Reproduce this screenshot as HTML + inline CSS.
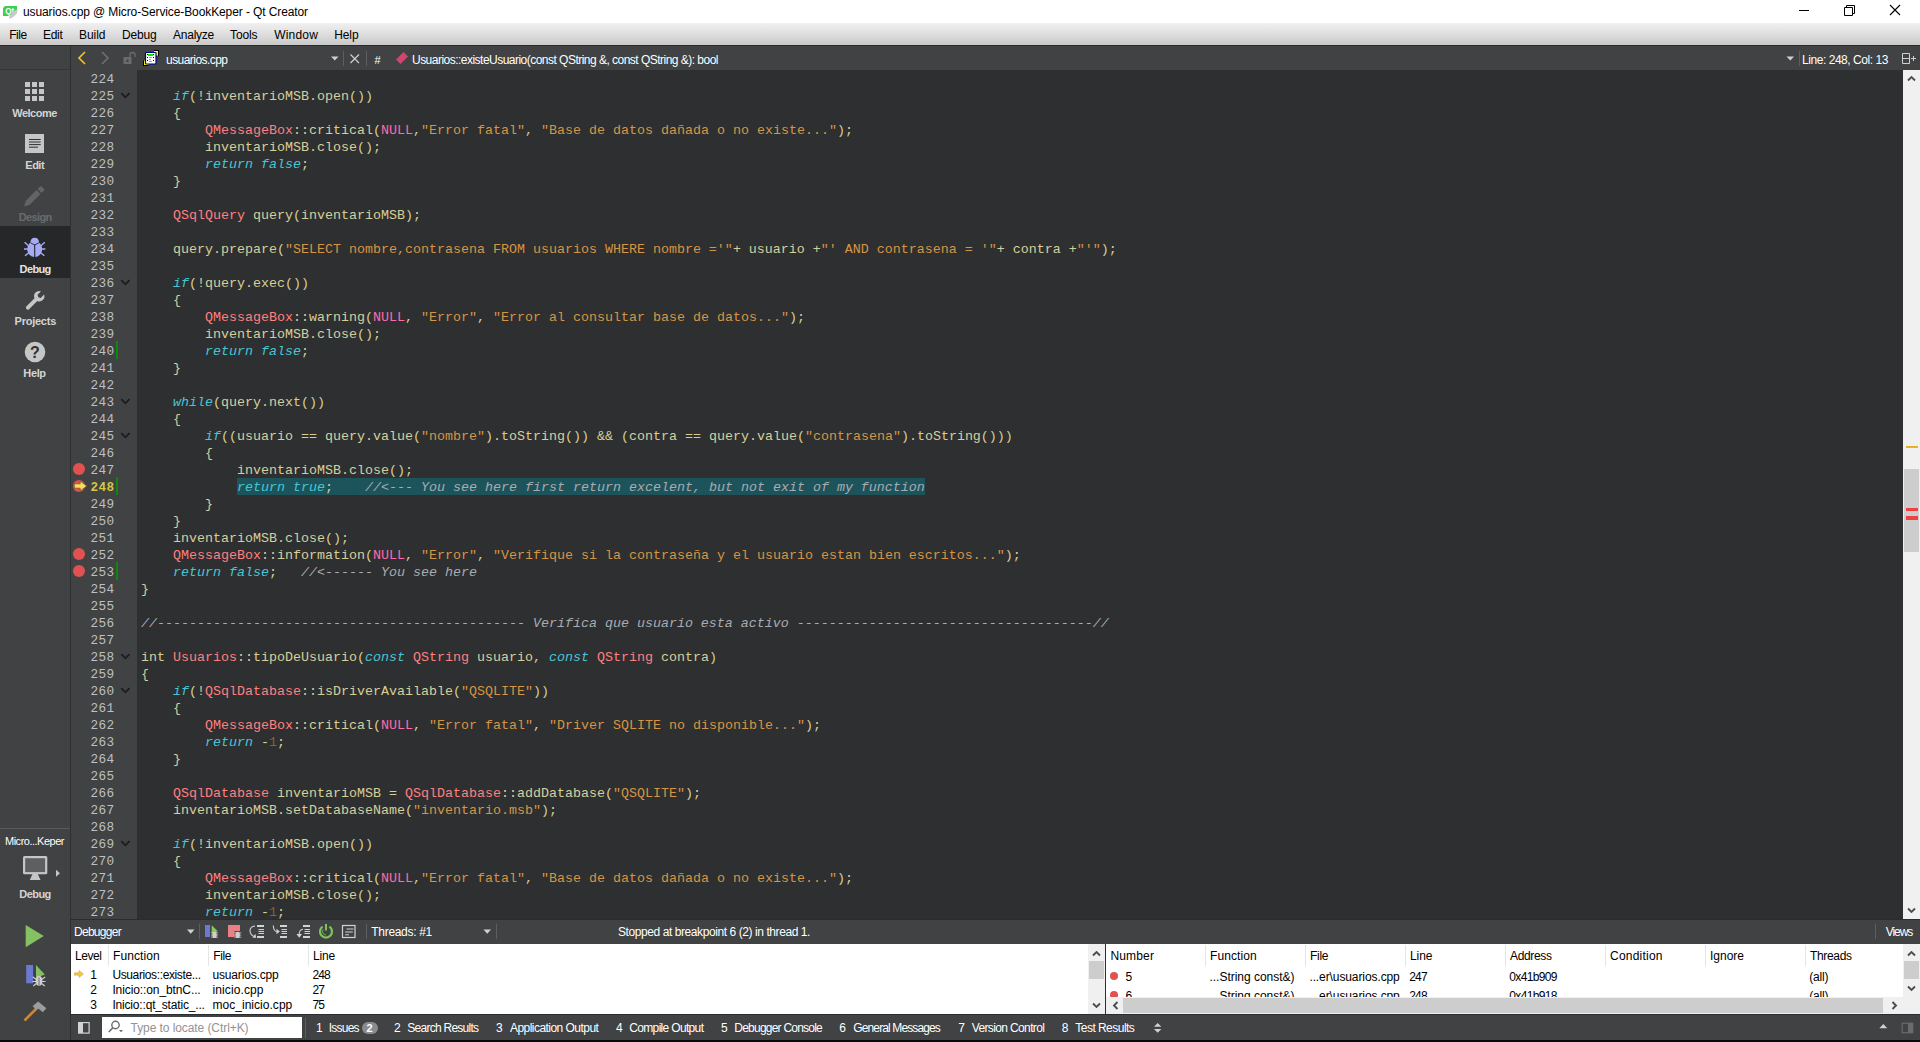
<!DOCTYPE html>
<html lang="es"><head><meta charset="utf-8"><title>usuarios.cpp @ Micro-Service-BookKeper - Qt Creator</title>
<style>
html,body{margin:0;padding:0;}
body{width:1920px;height:1042px;overflow:hidden;background:#404244;position:relative;font-family:"Liberation Sans",sans-serif;font-size:12px;}
.a{position:absolute;}
.t{position:absolute;white-space:pre;line-height:16px;height:16px;}
#code{position:absolute;left:141px;top:70px;font-family:"Liberation Mono",monospace;font-size:13.33px;line-height:17px;color:#d6cf9a;white-space:pre;margin:0;}
#code div{height:17px;line-height:19px;}
#nums{position:absolute;left:71px;top:70px;width:43.400px;text-align:right;font-family:"Liberation Mono",monospace;font-size:12.700px;letter-spacing:0.379px;line-height:17px;color:#bec0c2;white-space:pre;}
#nums div{height:17px;line-height:19px;}
.k{color:#45c6d6;font-style:italic;}
.ty{color:#ff8080;}
.m{color:#ff6aad;}
.s{color:#d69545;}
.n{color:#8a602c;}
.c{color:#a8abb0;font-style:italic;}
.sel{background:#1d545c;}
</style></head><body>

<div class="a" style="left:0;top:0;width:1920px;height:23px;background:#fff;"></div>
<svg class="a" style="left:0px;top:0px" width="22" height="23" viewBox="0 0 22 23">
<path d="M3 8 L5 6 L17 6 L17 13 L12 16 L3 16 Z" fill="#41cd52"/>
<text x="5.300" y="14" font-family="Liberation Sans, sans-serif" font-size="9" font-weight="bold" fill="#fff" textLength="9" lengthAdjust="spacingAndGlyphs">Qt</text>
<path d="M9 18.700 C9.500 14.500 13 10.500 17.800 9.300 C17.500 13.500 14 18 9 18.700 Z" fill="#c9c9c9"/>
</svg>
<span class="t" style="left:23px;top:4px;font-size:12px;color:#000;letter-spacing:-0.104px;">usuarios.cpp @ Micro-Service-BookKeper - Qt Creator</span>
<svg class="a" style="left:1780px;top:0" width="140" height="23" viewBox="0 0 140 23">
<path d="M19 10.5 H29" stroke="#000" stroke-width="1" fill="none"/>
<path d="M64.5 7.5 H72.5 V15.5 H64.5 Z M66.5 7.500 V5.5 H74.5 V13.5 H72.5" stroke="#000" stroke-width="1" fill="none"/>
<path d="M110 5 L120 15 M120 5 L110 15" stroke="#000" stroke-width="1.1" fill="none"/>
</svg>
<div class="a" style="left:0;top:23px;width:1920px;height:22px;background:linear-gradient(#f0f0f0,#e2e2e2 40%,#c9c9c9);"></div>
<span class="t" style="left:9.25px;top:26.5px;font-size:12px;color:#000;letter-spacing:-0.459px;">File</span>
<span class="t" style="left:43px;top:26.5px;font-size:12px;color:#000;letter-spacing:-0.295px;">Edit</span>
<span class="t" style="left:79px;top:26.5px;font-size:12px;color:#000;letter-spacing:-0.037px;">Build</span>
<span class="t" style="left:122px;top:26.5px;font-size:12px;color:#000;letter-spacing:-0.172px;">Debug</span>
<span class="t" style="left:173px;top:26.5px;font-size:12px;color:#000;letter-spacing:-0.242px;">Analyze</span>
<span class="t" style="left:230px;top:26.5px;font-size:12px;color:#000;letter-spacing:-0.103px;">Tools</span>
<span class="t" style="left:274.25px;top:26.5px;font-size:12px;color:#000;letter-spacing:0.178px;">Window</span>
<span class="t" style="left:334.25px;top:26.5px;font-size:12px;color:#000;letter-spacing:-0.108px;">Help</span>
<div class="a" style="left:0;top:45px;width:1920px;height:1px;background:#2b2c2d;"></div>
<div class="a" style="left:0;top:46px;width:70px;height:994px;background:#404244;"></div>
<div class="a" style="left:70px;top:46px;width:1px;height:994px;background:#2e2f30;"></div>
<div class="a" style="left:0;top:69px;width:70px;height:1px;background:#353637;"></div>
<div class="a" style="left:0;top:226px;width:70px;height:52px;background:#262728;"></div>
<svg class="a" style="left:25px;top:82px" width="19" height="19" viewBox="0 0 19 19"><rect x="0" y="0" width="5" height="5" fill="#c6c6c6"/><rect x="7" y="0" width="5" height="5" fill="#c6c6c6"/><rect x="14" y="0" width="5" height="5" fill="#c6c6c6"/><rect x="0" y="7" width="5" height="5" fill="#c6c6c6"/><rect x="7" y="7" width="5" height="5" fill="#c6c6c6"/><rect x="14" y="7" width="5" height="5" fill="#c6c6c6"/><rect x="0" y="14" width="5" height="5" fill="#c6c6c6"/><rect x="7" y="14" width="5" height="5" fill="#c6c6c6"/><rect x="14" y="14" width="5" height="5" fill="#c6c6c6"/></svg>
<span class="t" style="left:12.3px;top:105.3px;font-size:11px;color:#d4d4d4;font-weight:bold;letter-spacing:-0.513px;">Welcome</span>
<svg class="a" style="left:25px;top:134px" width="19" height="19" viewBox="0 0 19 19">
<rect x="0" y="0" width="19" height="19" fill="#c6c6c6"/>
<path d="M4 5.500H15.700M4 8H15.700M4 10.600H15.700M4 13.200H13" stroke="#303132" stroke-width="1"/>
</svg>
<span class="t" style="left:25.3px;top:157.2px;font-size:11px;color:#d4d4d4;font-weight:bold;letter-spacing:-0.494px;">Edit</span>
<svg class="a" style="left:23px;top:185px" width="24" height="24" viewBox="0 0 24 24">
<path d="M1 21.500 L2.800 15.700 L13.500 5 L17.500 9 L6.800 19.700 Z" fill="#636465"/>
<path d="M14.500 4 L17 1.500 Q17.800 0.800 18.600 1.500 L21 3.900 Q21.700 4.700 21 5.500 L18.500 8 Z" fill="#636465"/>
</svg>
<span class="t" style="left:18.7px;top:209.3px;font-size:11px;color:#6a6b6c;font-weight:bold;letter-spacing:-0.612px;">Design</span>
<svg class="a" style="left:0px;top:226px" width="70" height="52" viewBox="0 226 70 52">
<g stroke="#a5abf5" stroke-width="1.4" fill="none">
<path d="M24.600 242.300 L28.500 245.800 M24 249 H28 M25 255.800 L28.800 252.800 M44.800 242.300 L40.900 245.800 M45.400 249 H41.400 M44.400 255.800 L40.600 252.800"/>
</g>
<ellipse cx="34.700" cy="249.200" rx="7.500" ry="7.900" fill="#a5abf5"/>
<path d="M30.300 243.200 Q30.500 237.800 34.700 237.800 Q38.900 237.800 39.100 243.200 Z" fill="#a5abf5"/>
<path d="M34.700 244.500 V257.500" stroke="#262728" stroke-width="1.100"/>
<path d="M30.500 242.800 L34.700 245 L38.900 242.800" stroke="#262728" stroke-width="0.900" fill="none"/>
</svg>
<span class="t" style="left:19.6px;top:261.2px;font-size:11px;color:#e4e4e4;font-weight:bold;letter-spacing:-0.624px;">Debug</span>
<svg class="a" style="left:23.500px;top:288.500px" width="22" height="22" viewBox="0 0 24 24">
<path d="M2.500 19 L11.500 10 A5.500 5.500 0 0 1 18.500 2.600 L14.800 6.300 L15.600 8.900 L18.200 9.700 L21.900 6 A5.500 5.500 0 0 1 14.500 13 L5.500 22 Q4 23.200 2.700 21.800 Q1.400 20.400 2.500 19 Z" fill="#c6c6c6"/>
</svg>
<span class="t" style="left:14.6px;top:313.3px;font-size:11px;color:#d4d4d4;font-weight:bold;letter-spacing:-0.251px;">Projects</span>
<svg class="a" style="left:24px;top:341px" width="22" height="22" viewBox="0 0 22 22">
<circle cx="11" cy="11" r="10.300" fill="#c6c6c6"/>
<text x="11" y="16.500" text-anchor="middle" font-family="Liberation Sans, sans-serif" font-size="16" font-weight="bold" fill="#303132">?</text>
</svg>
<span class="t" style="left:23.3px;top:365.3px;font-size:11px;color:#d4d4d4;font-weight:bold;letter-spacing:-0.359px;">Help</span>
<div class="a" style="left:0;top:828px;width:70px;height:1px;background:#595a5c;"></div>
<span class="t" style="left:5px;top:833.3px;font-size:11px;color:#ffffff;letter-spacing:-0.493px;">Micro...Keper</span>
<svg class="a" style="left:0px;top:850px" width="70" height="40" viewBox="0 850 70 40">
<rect x="23" y="856" width="24.300" height="18.300" rx="1.500" fill="#c6c6c6"/>
<rect x="25.200" y="858.200" width="19.900" height="13.900" fill="#5e5f60"/>
<path d="M32.500 874 H37.800 L40.500 880 H29.800 Z" fill="#c6c6c6"/>
<path d="M56 869.800 L60 873.300 L56 876.800 Z" fill="#c6c6c6"/>
</svg>
<span class="t" style="left:19.3px;top:886px;font-size:11px;color:#d4d4d4;font-weight:bold;letter-spacing:-0.564px;">Debug</span>
<svg class="a" style="left:0px;top:920px" width="70" height="30" viewBox="0 920 70 30"><path d="M25.700 925 L43.800 936.100 L25.700 947.300 Z" fill="#85c163"/></svg>
<svg class="a" style="left:0px;top:960px" width="70" height="30" viewBox="0 960 70 30">
<rect x="26.200" y="965" width="6.900" height="18.300" fill="#6b7ad0"/>
<path d="M36 965 L44.800 974.500 L36 978 Z" fill="#85c163"/>
<ellipse cx="39" cy="981" rx="3.400" ry="4.700" fill="#cfcfcf"/>
<path d="M39 976 a2.500 2 0 0 1 2.500 2 h-5 a2.500 2 0 0 1 2.500 -2" fill="#cfcfcf"/>
<path d="M32.800 977 L36.500 979.500 M45.200 977 L41.500 979.500 M32.500 981.500 H36 M45.500 981.500 H42 M33.200 986 L36.500 983.500 M44.800 986 L41.500 983.500" stroke="#cfcfcf" stroke-width="1.200"/>
<path d="M39 977.500 V985.500" stroke="#404244" stroke-width="0.700"/>
</svg>
<svg class="a" style="left:0px;top:996px" width="70" height="30" viewBox="0 996 70 30">
<path d="M24.500 1020.500 L37.500 1007.500" stroke="#d6852a" stroke-width="2.600"/>
<path d="M32.700 1006 L38.200 1001.400 L46.400 1008.300 L42.800 1012.300 L38.600 1008.800 L35.600 1009.500 Z" fill="#9b9c9d"/>
</svg>
<div class="a" style="left:71px;top:46px;width:1849px;height:24px;background:#404244;"></div>
<svg class="a" style="left:71px;top:46px" width="360" height="24" viewBox="0 0 360 24">
<path d="M14 6 L8 12 L14 18" stroke="#ecc22e" stroke-width="1.700" fill="none"/>
<path d="M31 6 L37 12 L31 18" stroke="#6f7071" stroke-width="1.6" fill="none"/>
<rect x="52.5" y="11" width="8" height="7" fill="#6a6b6c"/><rect x="55.5" y="13.5" width="2" height="2.5" fill="#404244"/>
<path d="M59 11 V9 Q59 6.5 61.5 6.5 Q64 6.5 64 9 V11" stroke="#6a6b6c" stroke-width="1.3" fill="none"/>
<g>
<rect x="83" y="4" width="5" height="6.200" fill="#000"/><rect x="83" y="5" width="4" height="4.700" fill="#ffff00"/>
<rect x="72" y="14.500" width="5.200" height="5.500" fill="#000"/><rect x="73" y="14.500" width="4.200" height="4.500" fill="#ffff00"/>
<rect x="74.500" y="6.500" width="10.500" height="11.500" rx="0.800" fill="#fff" stroke="#00008b" stroke-width="1.200"/>
<rect x="77" y="8" width="5.200" height="2" fill="#00ee00"/>
<path d="M76 8.500h1M82 8.500h1M76 11.500h1M82 11.500h1M76 14.500h1M82 14.500h1" stroke="#000" stroke-width="1"/>
<path d="M78 11.500h3M78 13.500h2M78 15.500h3" stroke="#9a9a9a" stroke-width="1"/>
</g>
<path d="M260 10.5 H267.5 L263.75 14.5 Z" fill="#d0d0d0"/>
<path d="M272.5 5 V20" stroke="#5d5e5f" stroke-width="1"/>
<path d="M279.5 8.5 L288 17 M288 8.5 L279.5 17" stroke="#d0d0d0" stroke-width="1.2"/>
<path d="M295.5 5 V20" stroke="#5d5e5f" stroke-width="1"/>
<path d="M325 13.500 L332.500 6 L337 10.400 L329.450 18 Z" fill="#d6436f"/>
</svg>
<span class="t" style="left:166px;top:51.5px;font-size:12px;color:#ffffff;letter-spacing:-0.545px;">usuarios.cpp</span>
<span class="t" style="left:374.5px;top:51.5px;font-size:11px;color:#ffffff;">#</span>
<span class="t" style="left:412px;top:51.5px;font-size:12px;color:#ffffff;letter-spacing:-0.521px;">Usuarios::existeUsuario(const QString &amp;, const QString &amp;): bool</span>
<svg class="a" style="left:1780px;top:46px" width="140" height="24" viewBox="0 0 140 24">
<path d="M6.5 10.5 H14 L10.25 14.5 Z" fill="#d0d0d0"/>
<path d="M19.5 5 V20" stroke="#5d5e5f" stroke-width="1"/>
<path d="M122.500 7.500 H129.500 V17.500 H122.500 Z M122.500 12.500 H129.500 M131 12.500 H136 M133.500 10 V15" stroke="#d0d0d0" stroke-width="1" fill="none"/>
</svg>
<span class="t" style="left:1802px;top:51.5px;font-size:12px;color:#ffffff;letter-spacing:-0.448px;">Line: 248, Col: 13</span>
<div class="a" style="left:71px;top:70px;width:66px;height:849px;background:#404244;"></div>
<div class="a" style="left:137px;top:70px;width:1766px;height:849px;background:#2e2f30;"></div>
<div class="a" style="left:237px;top:478px;width:688px;height:17px;background:#1d545c;"></div>
<div id="code"><div></div><div>    <span class="k">if</span>(!inventarioMSB.open())</div><div>    {</div><div>        <span class="ty">QMessageBox</span>::critical(<span class="m">NULL</span>,<span class="s">"Error fatal"</span>, <span class="s">"Base de datos dañada o no existe..."</span>);</div><div>        inventarioMSB.close();</div><div>        <span class="k">return</span> <span class="k">false</span>;</div><div>    }</div><div></div><div>    <span class="ty">QSqlQuery</span> query(inventarioMSB);</div><div></div><div>    query.prepare(<span class="s">"SELECT nombre,contrasena FROM usuarios WHERE nombre ='"</span>+ usuario +<span class="s">"' AND contrasena = '"</span>+ contra +<span class="s">"'"</span>);</div><div></div><div>    <span class="k">if</span>(!query.exec())</div><div>    {</div><div>        <span class="ty">QMessageBox</span>::warning(<span class="m">NULL</span>, <span class="s">"Error"</span>, <span class="s">"Error al consultar base de datos..."</span>);</div><div>        inventarioMSB.close();</div><div>        <span class="k">return</span> <span class="k">false</span>;</div><div>    }</div><div></div><div>    <span class="k">while</span>(query.next())</div><div>    {</div><div>        <span class="k">if</span>((usuario == query.value(<span class="s">"nombre"</span>).toString()) &amp;&amp; (contra == query.value(<span class="s">"contrasena"</span>).toString()))</div><div>        {</div><div>            inventarioMSB.close();</div><div>            <span class="k">return</span> <span class="k">true</span>;    <span class="c">//&lt;--- You see here first return excelent, but not exit of my function</span></div><div>        }</div><div>    }</div><div>    inventarioMSB.close();</div><div>    <span class="ty">QMessageBox</span>::information(<span class="m">NULL</span>, <span class="s">"Error"</span>, <span class="s">"Verifique si la contraseña y el usuario estan bien escritos..."</span>);</div><div>    <span class="k">return</span> <span class="k">false</span>;   <span class="c">//&lt;------ You see here</span></div><div>}</div><div></div><div><span class="c">//---------------------------------------------- Verifica que usuario esta activo -------------------------------------//</span></div><div></div><div>int <span class="ty">Usuarios</span>::tipoDeUsuario(<span class="k">const</span> <span class="ty">QString</span> usuario, <span class="k">const</span> <span class="ty">QString</span> contra)</div><div>{</div><div>    <span class="k">if</span>(!<span class="ty">QSqlDatabase</span>::isDriverAvailable(<span class="s">"QSQLITE"</span>))</div><div>    {</div><div>        <span class="ty">QMessageBox</span>::critical(<span class="m">NULL</span>, <span class="s">"Error fatal"</span>, <span class="s">"Driver SQLITE no disponible..."</span>);</div><div>        <span class="k">return</span> -<span class="n">1</span>;</div><div>    }</div><div></div><div>    <span class="ty">QSqlDatabase</span> inventarioMSB = <span class="ty">QSqlDatabase</span>::addDatabase(<span class="s">"QSQLITE"</span>);</div><div>    inventarioMSB.setDatabaseName(<span class="s">"inventario.msb"</span>);</div><div></div><div>    <span class="k">if</span>(!inventarioMSB.open())</div><div>    {</div><div>        <span class="ty">QMessageBox</span>::critical(<span class="m">NULL</span>,<span class="s">"Error fatal"</span>, <span class="s">"Base de datos dañada o no existe..."</span>);</div><div>        inventarioMSB.close();</div><div>        <span class="k">return</span> -<span class="n">1</span>;</div></div>
<div id="nums"><div>224</div><div>225</div><div>226</div><div>227</div><div>228</div><div>229</div><div>230</div><div>231</div><div>232</div><div>233</div><div>234</div><div>235</div><div>236</div><div>237</div><div>238</div><div>239</div><div>240</div><div>241</div><div>242</div><div>243</div><div>244</div><div>245</div><div>246</div><div>247</div><div style="color:#d6c540;font-weight:bold">248</div><div>249</div><div>250</div><div>251</div><div>252</div><div>253</div><div>254</div><div>255</div><div>256</div><div>257</div><div>258</div><div>259</div><div>260</div><div>261</div><div>262</div><div>263</div><div>264</div><div>265</div><div>266</div><div>267</div><div>268</div><div>269</div><div>270</div><div>271</div><div>272</div><div>273</div></div>
<svg class="a" style="left:120px;top:91.5px" width="11" height="8" viewBox="0 0 11 8"><path d="M1.300 1.200 L5.400 5.300 L9.500 1.200" stroke="#1b1c1d" stroke-width="1.800" fill="none"/></svg>
<svg class="a" style="left:120px;top:278.5px" width="11" height="8" viewBox="0 0 11 8"><path d="M1.300 1.200 L5.400 5.300 L9.500 1.200" stroke="#1b1c1d" stroke-width="1.800" fill="none"/></svg>
<svg class="a" style="left:120px;top:397.5px" width="11" height="8" viewBox="0 0 11 8"><path d="M1.300 1.200 L5.400 5.300 L9.500 1.200" stroke="#1b1c1d" stroke-width="1.800" fill="none"/></svg>
<svg class="a" style="left:120px;top:431.5px" width="11" height="8" viewBox="0 0 11 8"><path d="M1.300 1.200 L5.400 5.300 L9.500 1.200" stroke="#1b1c1d" stroke-width="1.800" fill="none"/></svg>
<svg class="a" style="left:120px;top:652.5px" width="11" height="8" viewBox="0 0 11 8"><path d="M1.300 1.200 L5.400 5.300 L9.500 1.200" stroke="#1b1c1d" stroke-width="1.800" fill="none"/></svg>
<svg class="a" style="left:120px;top:686.5px" width="11" height="8" viewBox="0 0 11 8"><path d="M1.300 1.200 L5.400 5.300 L9.500 1.200" stroke="#1b1c1d" stroke-width="1.800" fill="none"/></svg>
<svg class="a" style="left:120px;top:839.5px" width="11" height="8" viewBox="0 0 11 8"><path d="M1.300 1.200 L5.400 5.300 L9.500 1.200" stroke="#1b1c1d" stroke-width="1.800" fill="none"/></svg>
<div class="a" style="left:116px;top:341px;width:2px;height:18px;background:#0a8a0a;"></div>
<div class="a" style="left:116px;top:477px;width:2px;height:18px;background:#0a8a0a;"></div>
<div class="a" style="left:116px;top:562px;width:2px;height:18px;background:#0a8a0a;"></div>
<div class="a" style="left:73px;top:463px;width:12px;height:12px;border-radius:6px;background:#e05252;"></div>
<div class="a" style="left:73px;top:480px;width:12px;height:12px;border-radius:6px;background:#e05252;"></div>
<div class="a" style="left:73px;top:548px;width:12px;height:12px;border-radius:6px;background:#e05252;"></div>
<div class="a" style="left:73px;top:565px;width:12px;height:12px;border-radius:6px;background:#e05252;"></div>
<svg class="a" style="left:72px;top:480px" width="16" height="12" viewBox="0 0 16 12"><path d="M2.300 3.800 H8.200 V1 L14.800 6 L8.200 11 V8.200 H2.300 Z" fill="#f4dc68" stroke="#6a5010" stroke-width="0.700"/></svg>
<div class="a" style="left:1903px;top:70px;width:17px;height:849px;background:#f0f0f0;"></div>
<div class="a" style="left:1904px;top:469px;width:15px;height:83px;background:#cdcdcd;"></div>
<div class="a" style="left:1906px;top:446px;width:12px;height:2px;background:#e6b422;"></div>
<div class="a" style="left:1906px;top:508px;width:12px;height:3px;background:#f04040;"></div>
<div class="a" style="left:1906px;top:516px;width:12px;height:4px;background:#f04040;"></div>
<svg class="a" style="left:1903px;top:70px" width="17" height="849" viewBox="0 0 17 849">
<path d="M5 10.5 L8.5 7 L12 10.500" stroke="#4d4d4d" stroke-width="1.900" fill="none"/>
<path d="M5 838.5 L8.5 842 L12 838.5" stroke="#4d4d4d" stroke-width="1.900" fill="none"/>
</svg>
<div class="a" style="left:71px;top:919px;width:1849px;height:1px;background:#2b2c2d;"></div>
<div class="a" style="left:71px;top:920px;width:1849px;height:24px;background:#404244;"></div>
<span class="t" style="left:74px;top:924.4px;font-size:12px;color:#ffffff;letter-spacing:-0.713px;">Debugger</span>
<span class="t" style="left:371.3px;top:924.4px;font-size:12px;color:#ffffff;letter-spacing:-0.304px;">Threads: #1</span>
<span class="t" style="left:618px;top:924.4px;font-size:12px;color:#ffffff;letter-spacing:-0.420px;">Stopped at breakpoint 6 (2) in thread 1.</span>
<span class="t" style="left:1885.7px;top:924.4px;font-size:12px;color:#ffffff;letter-spacing:-1.039px;">Views</span>
<svg class="a" style="left:0;top:0" width="1920" height="1042" viewBox="0 0 1920 1042"><path d="M187 929.5 h7.5 l-3.75 4.200 Z" fill="#d0d0d0"/><path d="M199.5 923.500 V939 M366.5 923.5 V939 M496.5 923.5 V939 M1875.5 923.5 V939" stroke="#5d5e5f" stroke-width="1"/><path d="M483.5 929.5 h7.5 l-3.75 4.200 Z" fill="#d0d0d0"/><rect x="205" y="925" width="5" height="12" fill="#6b7ad0"/><path d="M211.700 925.2 L217.800 931.200 L211.7 933.5 Z" fill="#8dc55f"/><g transform="translate(211,931)"><ellipse cx="3.500" cy="3.900" rx="2.200" ry="3.200" fill="#cfcfcf"/><path d="M0 1.800h7M0 4h7M0 6.200h7" stroke="#cfcfcf" stroke-width="0.800"/></g><path d="M228 925 h12 v6 h-5.500 v6 h-6.5 Z" fill="#e88085"/><g transform="translate(234.2,931)"><ellipse cx="3.500" cy="3.900" rx="2.200" ry="3.200" fill="#cfcfcf"/><path d="M0 1.800h7M0 4h7M0 6.200h7" stroke="#cfcfcf" stroke-width="0.800"/></g><path d="M257 926 h7 M257 937 h7" stroke="#d2d3d4" stroke-width="2"/><path d="M258.5 929.5 h5.500 M258.5 931.5 h5.5 M258.5 933.5 h5.5" stroke="#d2d3d4" stroke-width="1"/><path d="M255 926 Q250 926.500 250 931 Q250.500 935 254 936.500" stroke="#d2d3d4" stroke-width="1.1" fill="none"/><path d="M252.500 937.8 L256.200 937.8 L255.300 933.800 Z" fill="#d2d3d4"/><path d="M280 926 h7 M280 937 h7" stroke="#d2d3d4" stroke-width="2"/><path d="M281.5 929.5 h5.500 M281.5 931.5 h5.5 M281.5 933.5 h5.5" stroke="#d2d3d4" stroke-width="1"/><path d="M273.300 925.500 Q273.500 931.500 277 931.500" stroke="#d2d3d4" stroke-width="1.1" fill="none"/><path d="M276.500 928.800 L279.800 931.500 L276.500 934.200 Z" fill="#d2d3d4"/><path d="M303 926 h7 M303 937 h7" stroke="#d2d3d4" stroke-width="2"/><path d="M304.5 929.5 h5.500 M304.5 931.5 h5.5 M304.5 933.5 h5.5" stroke="#d2d3d4" stroke-width="1"/><path d="M303 929.200 Q299.200 929.500 299.200 934.500" stroke="#d2d3d4" stroke-width="1.1" fill="none"/><path d="M296.500 934 L302 934 L299.200 937.800 Z" fill="#d2d3d4"/><path d="M322.600 926.600 A6 6 0 1 0 329.400 926.600" stroke="#7fc25a" stroke-width="2.200" fill="none"/><path d="M326 924 V930.500" stroke="#7fc25a" stroke-width="2"/><path d="M323.200 929.500 A3.500 3.500 0 0 0 326 935" stroke="#7fc25a" stroke-width="0.8" fill="none"/><rect x="342.500" y="925.500" width="12.500" height="12" fill="none" stroke="#d2d3d4" stroke-width="1.2"/><path d="M346.500 929 h7 M345.200 932 h7.600 M345.200 934.800 h3.800" stroke="#d2d3d4" stroke-width="1"/></svg>
<div class="a" style="left:71px;top:944px;width:1034px;height:70px;background:#fff;"></div>
<div class="a" style="left:1105px;top:944px;width:1px;height:70px;background:#2e2f30;"></div>
<div class="a" style="left:1106px;top:944px;width:814px;height:70px;background:#fff;"></div>
<div class="a" style="left:108px;top:945px;width:1px;height:21px;background:#e5e5e5;"></div>
<div class="a" style="left:208px;top:945px;width:1px;height:21px;background:#e5e5e5;"></div>
<div class="a" style="left:308px;top:945px;width:1px;height:21px;background:#e5e5e5;"></div>
<span class="t" style="left:75px;top:948px;font-size:12px;color:#000;letter-spacing:-0.458px;">Level</span>
<span class="t" style="left:113px;top:948px;font-size:12px;color:#000;letter-spacing:0.097px;">Function</span>
<span class="t" style="left:213.2px;top:948px;font-size:12px;color:#000;letter-spacing:-0.384px;">File</span>
<span class="t" style="left:312.9px;top:948px;font-size:12px;color:#000;letter-spacing:-0.147px;">Line</span>
<span class="t" style="left:90.2px;top:967px;font-size:12px;color:#000;">1</span>
<span class="t" style="left:112.4px;top:967px;font-size:12px;color:#000;letter-spacing:-0.377px;">Usuarios::existe...</span>
<span class="t" style="left:212.5px;top:967px;font-size:12px;color:#000;letter-spacing:-0.170px;">usuarios.cpp</span>
<span class="t" style="left:312.4px;top:967px;font-size:12px;color:#000;letter-spacing:-0.807px;">248</span>
<span class="t" style="left:90.2px;top:982px;font-size:12px;color:#000;">2</span>
<span class="t" style="left:112.4px;top:982px;font-size:12px;color:#000;letter-spacing:-0.103px;">Inicio::on_btnC...</span>
<span class="t" style="left:212.5px;top:982px;font-size:12px;color:#000;letter-spacing:0.107px;">inicio.cpp</span>
<span class="t" style="left:312.4px;top:982px;font-size:12px;color:#000;letter-spacing:-0.924px;">27</span>
<span class="t" style="left:90.2px;top:997px;font-size:12px;color:#000;">3</span>
<span class="t" style="left:112.4px;top:997px;font-size:12px;color:#000;letter-spacing:-0.178px;">Inicio::qt_static_...</span>
<span class="t" style="left:212.5px;top:997px;font-size:12px;color:#000;letter-spacing:0.030px;">moc_inicio.cpp</span>
<span class="t" style="left:312.4px;top:997px;font-size:12px;color:#000;letter-spacing:-0.924px;">75</span>
<svg class="a" style="left:74px;top:970px" width="10" height="8" viewBox="0 0 10 8"><path d="M0.500 2.800 H5 V0.500 L9.500 4 L5 7.500 V5.200 H0.500 Z" fill="#f0c846" stroke="#c9a23a" stroke-width="0.5"/></svg>
<div class="a" style="left:1088px;top:944px;width:17px;height:70px;background:#f0f0f0;"></div>
<div class="a" style="left:1089px;top:961px;width:15px;height:18px;background:#cdcdcd;"></div>
<svg class="a" style="left:1088px;top:944px" width="17" height="70" viewBox="0 0 17 70"><path d="M5 11.500 L8.500 8 L12 11.500" stroke="#4d4d4d" stroke-width="1.900" fill="none"/><path d="M5 59.500 L8.500 63 L12 59.500" stroke="#4d4d4d" stroke-width="1.900" fill="none"/></svg>
<div class="a" style="left:1205px;top:945px;width:1px;height:21px;background:#e5e5e5;"></div>
<div class="a" style="left:1305px;top:945px;width:1px;height:21px;background:#e5e5e5;"></div>
<div class="a" style="left:1405px;top:945px;width:1px;height:21px;background:#e5e5e5;"></div>
<div class="a" style="left:1505px;top:945px;width:1px;height:21px;background:#e5e5e5;"></div>
<div class="a" style="left:1605px;top:945px;width:1px;height:21px;background:#e5e5e5;"></div>
<div class="a" style="left:1705px;top:945px;width:1px;height:21px;background:#e5e5e5;"></div>
<div class="a" style="left:1805px;top:945px;width:1px;height:21px;background:#e5e5e5;"></div>
<span class="t" style="left:1110.4px;top:948px;font-size:12px;color:#000;letter-spacing:0.170px;">Number</span>
<span class="t" style="left:1210px;top:948px;font-size:12px;color:#000;letter-spacing:0.097px;">Function</span>
<span class="t" style="left:1310px;top:948px;font-size:12px;color:#000;letter-spacing:-0.284px;">File</span>
<span class="t" style="left:1410px;top:948px;font-size:12px;color:#000;letter-spacing:-0.097px;">Line</span>
<span class="t" style="left:1510px;top:948px;font-size:12px;color:#000;letter-spacing:-0.332px;">Address</span>
<span class="t" style="left:1610px;top:948px;font-size:12px;color:#000;letter-spacing:0.222px;">Condition</span>
<span class="t" style="left:1710px;top:948px;font-size:12px;color:#000;letter-spacing:-0.004px;">Ignore</span>
<span class="t" style="left:1810px;top:948px;font-size:12px;color:#000;letter-spacing:-0.332px;">Threads</span>
<div class="a" style="left:1106px;top:966px;width:797px;height:31px;overflow:hidden;">
<div class="a" style="left:4px;top:6px;width:8px;height:8px;border-radius:4px;background:#e05252;"></div>
<span class="t" style="left:19.4px;top:3px;font-size:12px;color:#000;">5</span>
<span class="t" style="left:103.5px;top:3px;font-size:12px;color:#000;letter-spacing:-0.022px;">...String const&amp;)</span>
<span class="t" style="left:203.4px;top:3px;font-size:12px;color:#000;letter-spacing:-0.097px;">...er\usuarios.cpp</span>
<span class="t" style="left:303.3px;top:3px;font-size:12px;color:#000;letter-spacing:-0.874px;">247</span>
<span class="t" style="left:403.3px;top:3px;font-size:12px;color:#000;letter-spacing:-0.665px;">0x41b909</span>
<span class="t" style="left:703.3px;top:3px;font-size:12px;color:#000;letter-spacing:-0.200px;">(all)</span>
<div class="a" style="left:4px;top:25px;width:8px;height:8px;border-radius:4px;background:#e05252;"></div>
<span class="t" style="left:19.4px;top:22px;font-size:12px;color:#000;">6</span>
<span class="t" style="left:103.5px;top:22px;font-size:12px;color:#000;letter-spacing:-0.022px;">...String const&amp;)</span>
<span class="t" style="left:203.4px;top:22px;font-size:12px;color:#000;letter-spacing:-0.097px;">...er\usuarios.cpp</span>
<span class="t" style="left:303.3px;top:22px;font-size:12px;color:#000;letter-spacing:-0.874px;">248</span>
<span class="t" style="left:403.3px;top:22px;font-size:12px;color:#000;letter-spacing:-0.665px;">0x41b918</span>
<span class="t" style="left:703.3px;top:22px;font-size:12px;color:#000;letter-spacing:-0.200px;">(all)</span>
</div>
<div class="a" style="left:1903px;top:944px;width:17px;height:70px;background:#f0f0f0;"></div>
<div class="a" style="left:1904px;top:961px;width:15px;height:18px;background:#cdcdcd;"></div>
<svg class="a" style="left:1903px;top:944px" width="17" height="53" viewBox="0 0 17 53"><path d="M5 11.500 L8.500 8 L12 11.500" stroke="#4d4d4d" stroke-width="1.900" fill="none"/><path d="M5 42.500 L8.500 46 L12 42.500" stroke="#4d4d4d" stroke-width="1.900" fill="none"/></svg>
<div class="a" style="left:1106px;top:997px;width:797px;height:17px;background:#f0f0f0;"></div>
<div class="a" style="left:1123px;top:998px;width:760px;height:15px;background:#cdcdcd;"></div>
<svg class="a" style="left:1106px;top:997px" width="797" height="17" viewBox="0 0 797 17"><path d="M11.500 5 L8 8.500 L11.500 12" stroke="#4d4d4d" stroke-width="1.900" fill="none"/><path d="M786.500 5 L790 8.500 L786.500 12" stroke="#4d4d4d" stroke-width="1.900" fill="none"/></svg>
<div class="a" style="left:71px;top:1014px;width:1849px;height:1px;background:#2b2c2d;"></div>
<div class="a" style="left:71px;top:1015px;width:1849px;height:25px;background:#404244;"></div>
<div class="a" style="left:0;top:1040px;width:1920px;height:2px;background:#0a0a0a;"></div>
<svg class="a" style="left:78px;top:1022px" width="12" height="12" viewBox="0 0 12 12"><rect x="0.600" y="0.600" width="10.500" height="10.500" fill="none" stroke="#d2d3d4" stroke-width="1.2"/><rect x="0.500" y="0.500" width="4.500" height="10.500" fill="#d2d3d4"/></svg>
<div class="a" style="left:102px;top:1017px;width:200px;height:21px;background:#fff;"></div>
<svg class="a" style="left:107px;top:1020px" width="18" height="14" viewBox="0 0 18 14"><circle cx="8.500" cy="5" r="3.700" fill="none" stroke="#6a6b6c" stroke-width="1.4"/><path d="M5.800 7.800 L1.800 12" stroke="#6a6b6c" stroke-width="1.6"/><path d="M12 10 h4 l-2 2.200 Z" fill="#6a6b6c"/></svg>
<span class="t" style="left:130.6px;top:1020px;font-size:12px;color:#939393;letter-spacing:-0.079px;">Type to locate (Ctrl+K)</span>
<div class="a" style="left:305px;top:1018px;width:1px;height:20px;background:#5d5e5f;"></div>
<span class="t" style="left:316px;top:1020.4px;font-size:12px;color:#ffffff;">1</span>
<span class="t" style="left:328.75px;top:1020.4px;font-size:12px;color:#ffffff;letter-spacing:-0.780px;">Issues</span>
<span class="t" style="left:394px;top:1020.4px;font-size:12px;color:#ffffff;">2</span>
<span class="t" style="left:407.3px;top:1020.4px;font-size:12px;color:#ffffff;letter-spacing:-0.741px;">Search Results</span>
<span class="t" style="left:496px;top:1020.4px;font-size:12px;color:#ffffff;">3</span>
<span class="t" style="left:510px;top:1020.4px;font-size:12px;color:#ffffff;letter-spacing:-0.542px;">Application Output</span>
<span class="t" style="left:616px;top:1020.4px;font-size:12px;color:#ffffff;">4</span>
<span class="t" style="left:629.3px;top:1020.4px;font-size:12px;color:#ffffff;letter-spacing:-0.670px;">Compile Output</span>
<span class="t" style="left:721px;top:1020.4px;font-size:12px;color:#ffffff;">5</span>
<span class="t" style="left:734.3px;top:1020.4px;font-size:12px;color:#ffffff;letter-spacing:-0.773px;">Debugger Console</span>
<span class="t" style="left:839.3px;top:1020.4px;font-size:12px;color:#ffffff;">6</span>
<span class="t" style="left:853.3px;top:1020.4px;font-size:12px;color:#ffffff;letter-spacing:-0.876px;">General Messages</span>
<span class="t" style="left:958.3px;top:1020.4px;font-size:12px;color:#ffffff;">7</span>
<span class="t" style="left:971.7px;top:1020.4px;font-size:12px;color:#ffffff;letter-spacing:-0.630px;">Version Control</span>
<span class="t" style="left:1061.7px;top:1020.4px;font-size:12px;color:#ffffff;">8</span>
<span class="t" style="left:1075.3px;top:1020.4px;font-size:12px;color:#ffffff;letter-spacing:-0.530px;">Test Results</span>
<div class="a" style="left:362px;top:1022px;width:15.500px;height:12px;border-radius:6px;background:#8a8b8c;"></div>
<span class="t" style="left:366.6px;top:1020px;font-size:11px;color:#ffffff;font-weight:bold;">2</span>
<svg class="a" style="left:1153px;top:1022px" width="10" height="12" viewBox="0 0 10 12"><path d="M1 4.800 L4.700 1 L8.400 4.800 Z M1 7 L4.700 10.800 L8.400 7 Z" fill="#d0d0d0"/></svg>
<svg class="a" style="left:1876px;top:1020px" width="40" height="16" viewBox="0 0 40 16"><path d="M3.300 8.300 h8 l-4 -4.300 Z" fill="#d0d0d0"/><rect x="26.200" y="3.200" width="10.500" height="9.500" fill="none" stroke="#6a6b6c" stroke-width="1.2"/><rect x="32" y="3" width="5" height="10" fill="#6a6b6c"/></svg>
</body></html>
